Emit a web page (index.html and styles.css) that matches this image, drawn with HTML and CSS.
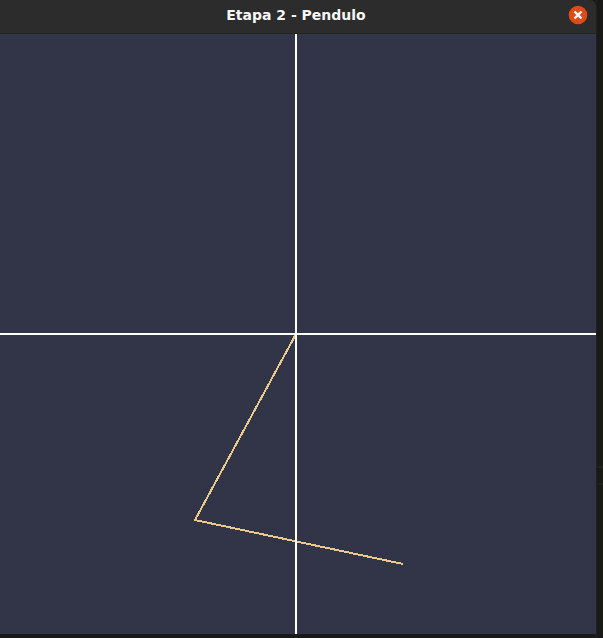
FILE: index.html
```html
<!DOCTYPE html>
<html lang="es">
<head>
<meta charset="utf-8">
<title>Etapa 2 - Pendulo</title>
<link rel="stylesheet" href="styles.css">
</head>
<body>
<main class="window">
  <header class="titlebar">
    <h1 class="title">Etapa 2 - Pendulo</h1>
    <button class="close" type="button" aria-label="Close">
      <svg viewBox="0 0 20 20" aria-hidden="true">
        <circle cx="10" cy="10" r="9.3"/>
        <path d="M6.5 6.5 13.5 13.5M13.5 6.5 6.5 13.5"/>
      </svg>
    </button>
  </header>
  <svg class="scene" viewBox="0 0 596 600" role="img" aria-label="Double pendulum">
    <path class="arm" d="M296 300 195 486 403 530"/>
    <path class="axis" d="M296 0V600M0 300H596"/>
  </svg>
</main>
<div class="backdrop"></div>
</body>
</html>
```
FILE: styles.css
```css
* {
  box-sizing: border-box;
}

body {
  margin: 0;
  min-height: 100vh;
  display: grid;
  grid-template-columns: 1fr 7px;
  background: #191a18;
}

.window {
  min-width: 0;
}

.titlebar {
  display: grid;
  grid-template-columns: 24px 1fr 28px;
  align-items: center;
  height: 34px;
  padding-bottom: 3px;
  background: #2c2c2c;
  border-bottom: 1px solid #242424;
  border-top-right-radius: 6px;
}

.title {
  grid-column: 2;
  margin: 0;
  color: #f7f7f7;
  font: bold 14px/20px "DejaVu Sans", sans-serif;
  text-align: center;
  white-space: nowrap;
}

.close {
  width: 20px;
  height: 20px;
  padding: 0;
  border: 0;
  background: none;
}

.close svg {
  display: block;
}

.close circle {
  fill: #e04a16;
}

.close path {
  fill: none;
  stroke: #fff;
  stroke-width: 2.4;
}

.scene {
  display: block;
  width: 100%;
  height: auto;
  background: #323547;
}

.axis,
.arm {
  fill: none;
  stroke-width: 2;
  shape-rendering: crispEdges;
}

.axis {
  stroke: #fff;
}

.arm {
  stroke: #e9ca8b;
}

.backdrop {
  border-left: 1px solid #20211f;
  background: linear-gradient(#191a18 466px, #21221f 466px 468px, #191a18 468px 483px, #21221f 483px 485px, #191a18 485px);
}
```
